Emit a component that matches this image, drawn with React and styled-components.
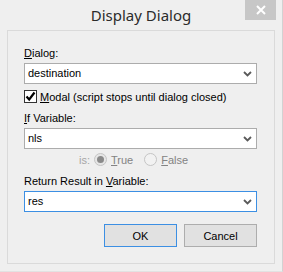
import React from "react";
import styled, { createGlobalStyle } from "styled-components";

const Global = createGlobalStyle`
  html, body {
    margin: 0;
    padding: 0;
    background: #efefef;
  }
  body {
    font-family: "Liberation Sans", Arial, sans-serif;
    font-size: 11px;
  }
`;

function Chevron() {
  return (
    <svg width="9" height="6" viewBox="0 0 9 6">
      <polyline
        points="1,1 4.5,4.5 8,1"
        fill="none"
        stroke="#5a5a5a"
        strokeWidth="1.8"
      />
    </svg>
  );
}

function Combo({ value, focused }) {
  return (
    <ComboBox focused={focused}>
      <span>{value}</span>
      <Chevron />
    </ComboBox>
  );
}

export default function App() {
  return (
    <Window>
      <Global />
      <TitleBar>
        <Title>Display Dialog</Title>
        <Close>
          <svg width="10" height="10" viewBox="0 0 10 10">
            <path d="M1,1 L9,9 M9,1 L1,9" stroke="#fff" strokeWidth="2" />
          </svg>
        </Close>
      </TitleBar>
      <Panel>
        <Label>
          <u>D</u>ialog:
        </Label>
        <Combo value="destination" />
        <CheckRow>
          <CheckBox>
            <svg width="11" height="11" viewBox="0 0 11 11">
              <polyline
                points="1.5,5.5 4.2,8.5 9.5,1.5"
                fill="none"
                stroke="#000"
                strokeWidth="2.2"
              />
            </svg>
          </CheckBox>
          <span>
            <u>M</u>odal (script stops until dialog closed)
          </span>
        </CheckRow>
        <Label spaced>
          <u>I</u>f Variable:
        </Label>
        <Combo value="nls" />
        <RadioRow>
          <IsLabel>is:</IsLabel>
          <Radio checked />
          <RadioText>
            <u>T</u>rue
          </RadioText>
          <Radio />
          <RadioText>
            <u>F</u>alse
          </RadioText>
        </RadioRow>
        <Label spaced>
          Return Result in <u>V</u>ariable:
        </Label>
        <Combo value="res" focused />
        <Buttons>
          <Button primary>OK</Button>
          <Button>Cancel</Button>
        </Buttons>
      </Panel>
    </Window>
  );
}

const Window = styled.div`
  width: 283px;
  height: 272px;
  box-sizing: border-box;
  border-right: 1px solid #d2d2d2;
  border-bottom: 1px solid #e2e2e2;
  background: #efefef;
  display: flex;
  flex-direction: column;
  color: #000;
`;

const TitleBar = styled.div`
  height: 30px;
  position: relative;
  display: flex;
  align-items: center;
  justify-content: center;
`;

const Title = styled.div`
  font-family: "Noto Sans", sans-serif;
  font-size: 15px;
  color: #2b2b2b;
`;

const Close = styled.div`
  position: absolute;
  top: 0;
  right: 6px;
  width: 31px;
  height: 20px;
  background: #c7c7c7;
  display: flex;
  align-items: center;
  justify-content: center;
`;

const Panel = styled.div`
  margin-left: 7px;
  width: 268px;
  height: 234px;
  box-sizing: border-box;
  border: 1px solid #dadada;
  padding: 15px 17px 0 16px;
  display: flex;
  flex-direction: column;
`;

const Label = styled.div`
  line-height: 15px;
  height: 15px;
  margin-top: ${(p) => (p.spaced ? "8px" : "0")};
  margin-bottom: 2px;
  color: #000;
`;

const ComboBox = styled.div`
  height: 21px;
  box-sizing: border-box;
  border: 1px solid ${(p) => (p.focused ? "#3c8fe3" : "#acacac")};
  background: #fff;
  display: flex;
  align-items: center;
  justify-content: space-between;
  padding: 0 4px 0 3px;
  line-height: 15px;
`;

const CheckRow = styled.div`
  display: flex;
  align-items: center;
  height: 13px;
  margin-top: 6px;
  gap: 3px;
`;

const CheckBox = styled.div`
  width: 13px;
  height: 13px;
  box-sizing: border-box;
  border: 1px solid #333;
  background: #fff;
  display: flex;
  align-items: center;
  justify-content: center;
`;

const RadioRow = styled.div`
  display: flex;
  align-items: center;
  height: 13px;
  margin-top: 4px;
  padding-left: 55px;
  color: #838383;
`;

const IsLabel = styled.span`
  color: #a6a6a6;
  margin-right: 4px;
`;

const Radio = styled.span`
  width: 13px;
  height: 13px;
  box-sizing: border-box;
  border-radius: 50%;
  border: 1px solid #c5c5c5;
  background: ${(p) => (p.checked ? "#e6e6e6" : "#f2f2f2")};
  display: flex;
  align-items: center;
  justify-content: center;
  &::after {
    content: "";
    display: ${(p) => (p.checked ? "block" : "none")};
    width: 7px;
    height: 7px;
    border-radius: 50%;
    background: #8a8a8a;
  }
`;

const RadioText = styled.span`
  margin-left: 4px;
  margin-right: 11px;
`;

const Buttons = styled.div`
  display: flex;
  justify-content: flex-end;
  gap: 7px;
  margin-top: 12px;
`;

const Button = styled.div`
  width: 73px;
  height: 23px;
  box-sizing: border-box;
  border: 1px solid ${(p) => (p.primary ? "#3c8fe3" : "#adadad")};
  background: #e1e1e1;
  display: flex;
  align-items: center;
  justify-content: center;
`;
